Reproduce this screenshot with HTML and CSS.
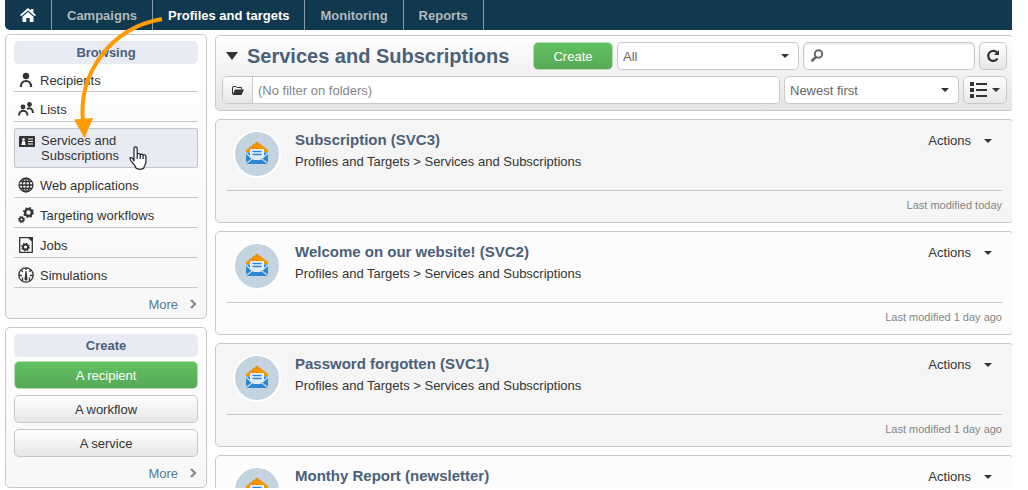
FILE: index.html
```html
<!DOCTYPE html>
<html lang="en">
<head>
<meta charset="utf-8">
<title>Services and Subscriptions</title>
<link rel="stylesheet" href="styles.css">
</head>
<body>
<svg class="defs" aria-hidden="true">
  <symbol id="caret" viewBox="0 0 8 4"><path d="M0 0h8L4 4z"/></symbol>
  <symbol id="chevron" viewBox="0 0 8 10"><path d="M2 1l4 4-4 4" fill="none" stroke="#8c8c8c" stroke-width="2.4"/></symbol>
  <symbol id="mail" viewBox="0 0 44 44">
    <path d="M11 20v-2l11-8.500L33 18v2z" fill="#f29400"/>
    <path d="M11 20.500h22V32H11z" fill="#2f86d2"/>
    <path d="M15 17h14v8l-4 3h-6l-4-3z" fill="#e8f0f6"/>
    <path d="M17.500 19.500h9M17.500 22.500h9" stroke="#2f86d2" stroke-width="1.500"/>
    <path d="M11 31.500l7.500-5.500h7l7.500 5.500M11 21l6 5.500M33 21l-6 5.500" fill="none" stroke="#d5e2ec" stroke-width="1.200"/>
  </symbol>
</svg>
<div class="app">
  <nav class="topnav">
    <a class="home" href="#" aria-label="Home"><svg width="16" height="14" viewBox="0 0 16 14"><path d="M8 0L0 7l1.300 1.300L8 2.500l6.700 5.800L16 7l-2.600-2.300V1H11v1.600z" fill="#fff"/><path d="M2.500 8.800L8 4l5.500 4.800V14H9.700v-4H6.300v4H2.500z" fill="#fff"/></svg></a>
    <a href="#">Campaigns</a>
    <a class="current" href="#">Profiles and targets</a>
    <a href="#">Monitoring</a>
    <a href="#">Reports</a>
  </nav>
  <div class="columns">
    <aside class="sidebar">
      <section class="panel">
        <h2>Browsing</h2>
        <ul class="menu">
          <li><a href="#"><svg viewBox="0 0 16 16"><circle cx="8" cy="4" r="3.200"/><path d="M2.800 15c0-8 10.400-8 10.400 0" fill="none" stroke="#333" stroke-width="2.200"/></svg>Recipients</a></li>
          <li><a href="#"><svg viewBox="0 0 16 16"><circle cx="5" cy="6" r="2.400"/><path d="M1 14.500c0-6.500 8.500-6.500 8.500 0" fill="none" stroke="#333" stroke-width="2"/><circle cx="11.500" cy="3.500" r="2.400"/><path d="M9 8c3-2 6 0 6 4" fill="none" stroke="#333" stroke-width="2"/></svg>Lists</a></li>
          <li class="selected"><a href="#"><svg viewBox="0 0 16 16"><rect y="3" width="16" height="11" rx="1"/><circle cx="4.500" cy="6.500" r="1.300" fill="#fff"/><path d="M2.300 12l1-4h2.400l1 4z" fill="#fff"/><path d="M9 6h5M9 8.500h5M9 11h5" stroke="#fff" stroke-width="1.200"/></svg>Services and Subscriptions</a></li>
          <li><a href="#"><svg viewBox="0 0 16 16"><g fill="none" stroke="#333" stroke-width="1.300"><circle cx="8" cy="8" r="6.900"/><ellipse cx="8" cy="8" rx="3.600" ry="6.900"/><path d="M8 1v14M1 8h14M2.200 4.500h11.600M2.200 11.500h11.600"/></g></svg>Web applications</a></li>
          <li><a href="#"><svg viewBox="0 0 16 16"><g fill="none" stroke="#333"><circle cx="10.500" cy="5.500" r="3.400" stroke-width="2.400"/><circle cx="10.500" cy="5.500" r="4.800" stroke-width="1.400" stroke-dasharray="1.900 1.870"/><circle cx="3.500" cy="12.500" r="1.900" stroke-width="1.600"/><circle cx="3.500" cy="12.500" r="2.900" stroke-width="1.200" stroke-dasharray="1.200 1.077"/></g></svg>Targeting workflows</a></li>
          <li><a href="#"><svg viewBox="0 0 16 16"><path d="M1.700.7h8.800l3.800 3.800v10.800H1.700z" fill="#fff" stroke="#333" stroke-width="1.300"/><path d="M9.500 0H15v6z"/><path d="M10 1.500l3.500 3.500" stroke="#fff"/><circle cx="7.500" cy="10" r="2.500" fill="none" stroke="#333" stroke-width="2"/><circle cx="7.500" cy="10" r="3.800" fill="none" stroke="#333" stroke-width="1.200" stroke-dasharray="1.500 1.484"/></svg>Jobs</a></li>
          <li><a href="#"><svg viewBox="0 0 16 16"><g fill="none" stroke="#333" stroke-width="1.300"><circle cx="8" cy="8" r="7.200"/><path d="M1 8.500h3M12 8.500h3M3.200 3.200l1.600 1.600M12.800 3.200l-1.600 1.600M8 1v2M4.500 14v-3.500M11.500 14v-3.500"/></g><path d="M7.500 4h1l1 8a1.500 1.500 0 0 1-3 0z"/></svg>Simulations</a></li>
        </ul>
        <a class="more" href="#">More<svg><use href="#chevron"/></svg></a>
      </section>
      <section class="panel">
        <h2>Create</h2>
        <div class="buttons">
          <button class="btn primary" type="button">A recipient</button>
          <button class="btn" type="button">A workflow</button>
          <button class="btn" type="button">A service</button>
        </div>
        <a class="more" href="#">More<svg><use href="#chevron"/></svg></a>
      </section>
    </aside>
    <main class="content">
      <header class="toolbar">
        <div class="row">
          <svg class="toggle" viewBox="0 0 12 8"><path d="M0 0h12L6 8z"/></svg>
          <h1>Services and Subscriptions</h1>
          <button class="btn primary create" type="button">Create</button>
          <span class="select kind"><select aria-label="Type"><option>All</option></select><svg class="caret"><use href="#caret"/></svg></span>
          <label class="search"><svg viewBox="0 0 14 14"><circle cx="8.500" cy="5" r="3.700" fill="none" stroke="#666" stroke-width="2"/><path d="M6 8l-4.500 4.300" stroke="#666" stroke-width="2.600"/></svg><input type="text" aria-label="Search"></label>
          <button class="btn refresh" type="button" aria-label="Refresh"><svg width="14" height="14" viewBox="0 0 14 14"><path d="M11.300 4A5 5 0 1 0 11.500 9.500" fill="none" stroke="#333" stroke-width="2.200"/><path d="M13 1v5H8z"/></svg></button>
        </div>
        <div class="row">
          <div class="folder">
            <button type="button" aria-label="Choose folder"><svg width="12" height="9" viewBox="0 0 12 9"><path d="M.5 8V1l.5-.5h3l1 1h4.500v2" fill="none" stroke="#333"/><path d="M3 3.500h9L9.500 9H.5z"/></svg></button>
            <input type="text" placeholder="(No filter on folders)" aria-label="Folder filter">
          </div>
          <span class="select sort"><select aria-label="Sort order"><option>Newest first</option></select><svg class="caret"><use href="#caret"/></svg></span>
          <button class="btn view" type="button" aria-label="List view"><svg width="17" height="16" viewBox="0 0 17 16"><path d="M0 0h4v4H0zM0 6h4v4H0zM0 12h4v4H0zM6 1h11v2H6zM6 7h11v2H6zM6 13h11v2H6z"/></svg><svg class="caret"><use href="#caret"/></svg></button>
        </div>
      </header>
      <article class="card">
        <div class="summary"><svg class="avatar"><use href="#mail"/></svg><div class="text"><h3>Subscription (SVC3)</h3><p>Profiles and Targets &gt; Services and Subscriptions</p></div><button class="actions" type="button">Actions<svg class="caret"><use href="#caret"/></svg></button></div>
        <footer>Last modified today</footer>
      </article>
      <article class="card">
        <div class="summary"><svg class="avatar"><use href="#mail"/></svg><div class="text"><h3>Welcome on our website! (SVC2)</h3><p>Profiles and Targets &gt; Services and Subscriptions</p></div><button class="actions" type="button">Actions<svg class="caret"><use href="#caret"/></svg></button></div>
        <footer>Last modified 1 day ago</footer>
      </article>
      <article class="card">
        <div class="summary"><svg class="avatar"><use href="#mail"/></svg><div class="text"><h3>Password forgotten (SVC1)</h3><p>Profiles and Targets &gt; Services and Subscriptions</p></div><button class="actions" type="button">Actions<svg class="caret"><use href="#caret"/></svg></button></div>
        <footer>Last modified 1 day ago</footer>
      </article>
      <article class="card">
        <div class="summary"><svg class="avatar"><use href="#mail"/></svg><div class="text"><h3>Monthy Report (newsletter)</h3></div><button class="actions" type="button">Actions<svg class="caret"><use href="#caret"/></svg></button></div>
      </article>
    </main>
  </div>
</div>
<svg class="pointer-arrow" viewBox="0 0 100 126" aria-hidden="true"><path d="M92 7C40 16 8 62 13 110" fill="none" stroke="#ff9a00" stroke-width="4"/><path d="M4 107.500l19-1.500-8.500 20z" fill="#ff9a00"/></svg>
<svg class="hand" viewBox="0 0 18 24" aria-hidden="true"><path d="M5 15V2.500a1.600 1.600 0 0 1 3.200 0V9c0-2 3-2 3 .2 0-1.700 2.900-1.500 2.900.5 0-1.500 2.800-1.300 2.800.8V16c0 3-2 3.500-2 6-2 1.700-6 1.700-8 0 0-3-5.500-6-6-9.500.7-2 3-.6 4.100 2.500zM8.200 9v4M11.200 9.500V13M14.100 10v3" fill="#fff" stroke="#1c1c30" stroke-width="1.200" stroke-linejoin="round"/></svg>
</body>
</html>
```
FILE: styles.css
```css
* { box-sizing: border-box; }

body {
  margin: 0;
  background: #fff;
  color: #333;
  font: 13px/15px "Liberation Sans", Arial, sans-serif;
}

h1, h2, h3, p, ul { margin: 0; padding: 0; }
a { color: inherit; text-decoration: none; }
button, input, select { font: inherit; color: inherit; margin: 0; }
svg { display: block; flex: none; fill: #333; }
.defs { position: absolute; width: 0; height: 0; }
.caret { width: 8px; height: 4px; }

.app {
  height: calc(100vh - 2px);
  margin: 0 16px 0 5px;
  overflow: hidden;
}

.topnav {
  display: flex;
  height: 30px;
  background: #10384f;
  border-bottom-left-radius: 5px;
  color: #b4b9bc;
  font-weight: bold;
}
.topnav a {
  display: flex;
  align-items: center;
  padding: 0 15px;
  border-right: 1px solid #8a9ca7;
}
.topnav .current { color: #fff; }

.columns { display: flex; gap: 8px; padding-top: 4px; }

.sidebar {
  display: flex;
  flex: none;
  flex-direction: column;
  gap: 8px;
  width: 202px;
}
.panel {
  padding: 6px 8px 5px;
  border: 1px solid #c8c8c8;
  border-radius: 5px;
  background: linear-gradient(#fff, #f7f7f7);
}
.panel h2 {
  border-radius: 5px;
  background: #e8ebf4;
  color: #4b6079;
  font-size: 13px;
  line-height: 23px;
  text-align: center;
}
.menu { list-style: none; }
.menu li { border-bottom: 1px solid #c8c8c8; }
.menu a {
  display: flex;
  align-items: center;
  gap: 6px;
  height: 29px;
  padding: 5px 4px 0;
}
.menu li:first-child a { height: 27px; }
.menu svg { width: 16px; height: 16px; }
.menu .selected {
  margin-top: 6px;
  border: 1px solid #c2c4ce;
  border-radius: 2px;
  background: #e8ebf4;
}
.menu .selected a {
  align-items: flex-start;
  height: 38px;
  padding: 4px 60px 4px 4px;
}
.more {
  display: flex;
  align-items: center;
  justify-content: flex-end;
  gap: 11px;
  height: 25px;
  padding: 7px 1px 0 0;
  color: #547b99;
}
.more svg { width: 8px; height: 10px; }
.buttons { display: grid; gap: 6px; padding-top: 4px; }

.btn {
  display: flex;
  align-items: center;
  justify-content: center;
  height: 28px;
  padding: 0;
  border: 1px solid #c8c8c8;
  border-radius: 5px;
  background: linear-gradient(#fff, #e6e6e6);
}
.primary {
  border-color: #b5deb0;
  background: linear-gradient(#62c162, #57a957);
  color: #fff;
}

.content {
  display: flex;
  flex: 1;
  flex-direction: column;
  gap: 8px;
  min-width: 0;
  padding-top: 1px;
  margin-right: -2px;
}
.toolbar {
  display: grid;
  gap: 6px;
  padding: 6px;
  border: 1px solid #c8c8c8;
  border-radius: 5px;
  background: linear-gradient(#fff, #e4e4e4);
}
.row { display: flex; align-items: center; gap: 4px; }
.toggle { width: 12px; height: 8px; margin: 0 5px 0 4px; }
h1 {
  flex: 1;
  color: #4b6079;
  font-size: 20px;
  line-height: 28px;
  white-space: nowrap;
}
.create { width: 80px; }
.select {
  display: grid;
  align-items: center;
  justify-items: end;
  height: 28px;
  border: 1px solid #c8c8c8;
  border-radius: 5px;
  background: #fff;
  color: #666;
}
.select > * { grid-area: 1 / 1; }
.select select {
  appearance: none;
  width: 100%;
  height: 26px;
  padding: 0 20px 0 5px;
  border: 0;
  background: transparent;
}
.select .caret { margin-right: 9px; pointer-events: none; }
.kind { width: 182px; }
.sort { width: 175px; }
.search {
  display: flex;
  align-items: center;
  width: 172px;
  height: 28px;
  padding-left: 6px;
  border: 1px solid #c8c8c8;
  border-radius: 5px;
  background: #fff;
  box-shadow: inset 0 1px 2px #ddd;
}
.search svg { width: 14px; height: 14px; }
.search input { flex: 1; min-width: 0; border: 0; background: none; }
.refresh { width: 28px; }
.folder {
  display: flex;
  flex: 1;
  height: 28px;
  overflow: hidden;
  border: 1px solid #c8c8c8;
  border-radius: 5px;
  background: #fff;
}
.folder button {
  display: flex;
  align-items: center;
  justify-content: center;
  width: 30px;
  border: 0;
  border-right: 1px solid #c8c8c8;
  background: linear-gradient(#fff, #e6e6e6);
}
.folder input { flex: 1; min-width: 0; padding: 0 5px; border: 0; }
.folder input::placeholder { color: #858585; opacity: 1; }
.view { gap: 5px; width: 44px; }

.card {
  padding: 10px 11px;
  border: 1px solid #c8c8c8;
  border-radius: 5px;
  background: #fcfcfc;
}
.card:nth-of-type(odd) { background: #f5f5f5; }
.summary {
  display: flex;
  align-items: flex-start;
  height: 60px;
  padding-left: 6px;
}
.avatar {
  width: 48px;
  height: 48px;
  border: 2px solid #fff;
  border-radius: 50%;
  background: #c3d4e0;
}
.text { flex: 1; padding-left: 14px; }
.card h3 {
  color: #4b6079;
  font-size: 15px;
  line-height: 20px;
}
.card p { padding-top: 4px; }
.actions {
  display: flex;
  align-items: center;
  gap: 13px;
  padding: 3px 10px 3px 0;
  border: 0;
  background: none;
}
.card footer {
  padding-top: 7px;
  border-top: 1px solid #c8c8c8;
  color: #858585;
  font-size: 11px;
  line-height: 14px;
  text-align: right;
}

/* Annotation lying over the navigation */
.pointer-arrow {
  position: absolute;
  top: 12px;
  left: 70px;
  width: 100px;
  height: 126px;
  pointer-events: none;
}
.hand {
  position: absolute;
  top: 146px;
  left: 129px;
  width: 18px;
  height: 24px;
  pointer-events: none;
}
```
